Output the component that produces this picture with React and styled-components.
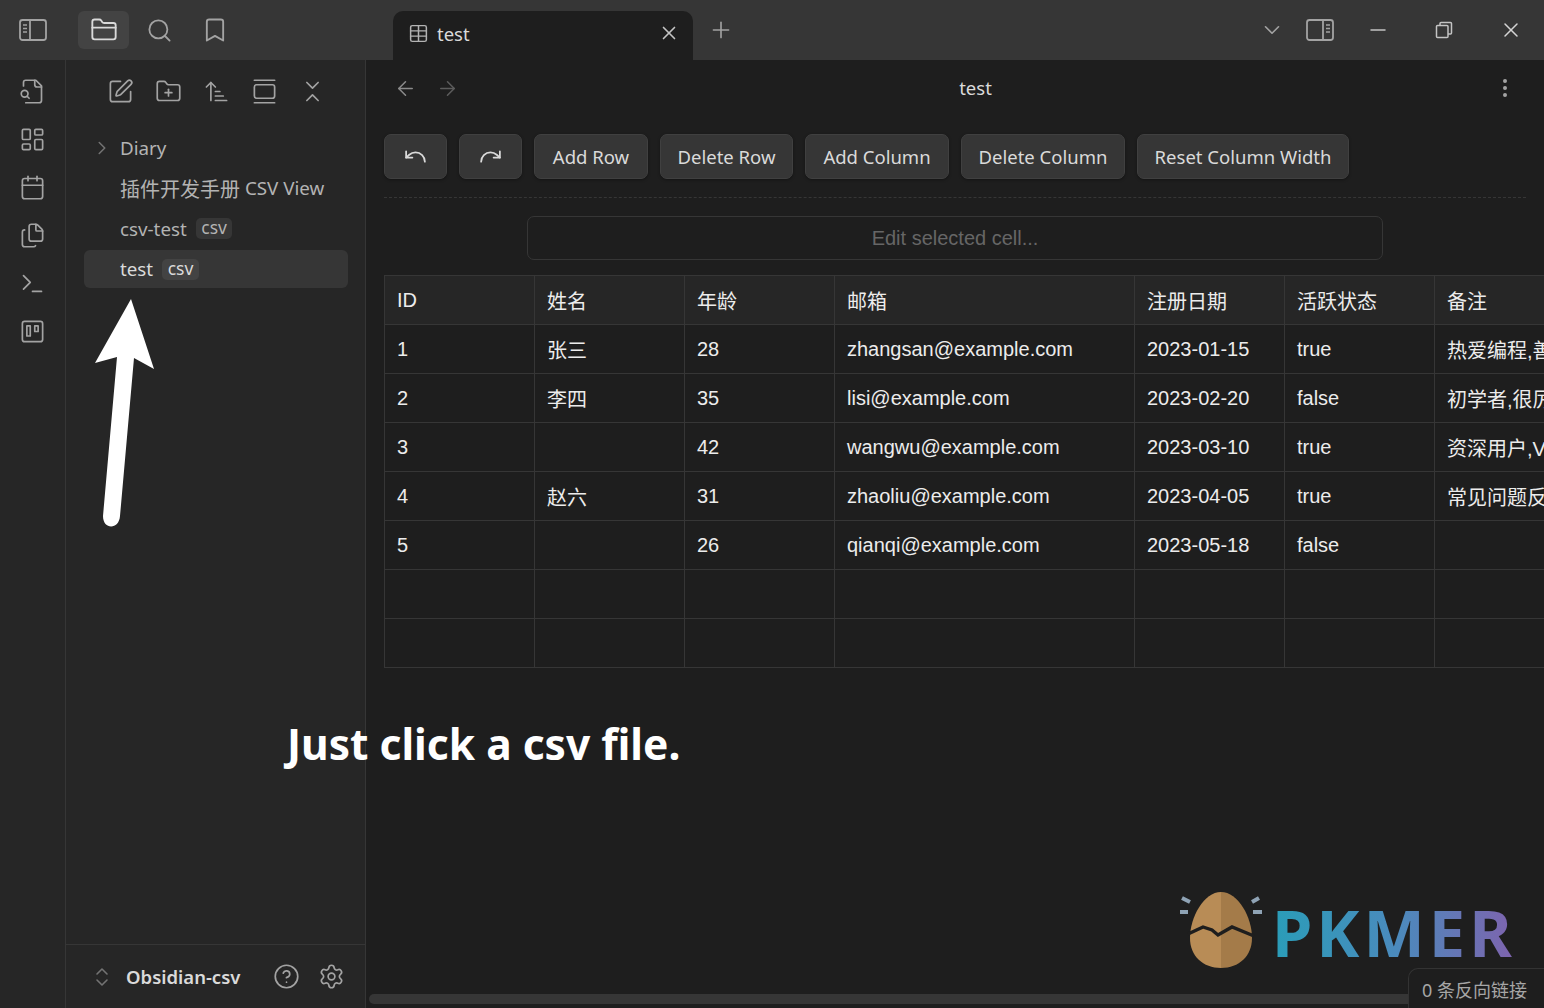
import React from 'react';
import styled, { createGlobalStyle } from 'styled-components';
import {
  ArrowLeft, ArrowRight, ArrowUpNarrowWide, Bookmark, Calendar, ChevronDown, ChevronRight,
  ChevronsDownUp, ChevronsUpDown, CircleHelp, EllipsisVertical, Files, FolderClosed,
  FolderPlus, GalleryVertical, LayoutDashboard, Minus, Plus, Redo, Search, Settings, SquarePen,
  Table, Terminal, Trello, Undo, X,
} from 'lucide-react';

const UI_FONT = `"Noto Sans", "Noto Sans CJK SC", sans-serif`;
const TABLE_FONT = `"Liberation Sans", "Noto Sans CJK SC", sans-serif`;

const GlobalStyle = createGlobalStyle`
  html, body, #root {
    margin: 0;
    padding: 0;
    height: 100%;
    background: #1e1e1e;
    overflow: hidden;
  }
  * {
    box-sizing: border-box;
  }
`;

const Page = styled.div`
  position: relative;
  width: 1544px;
  height: 1008px;
  display: flex;
  flex-direction: column;
  overflow: hidden;
  font-family: ${UI_FONT};
  color: #dadada;
`;

const TitleBar = styled.header`
  flex: 0 0 60px;
  display: flex;
  background: #363636;
`;

const TitleLeft = styled.div`
  flex: 0 0 393px;
  display: flex;
  align-items: flex-start;
  padding: 11px 0 0 8px;
`;

const IconSlot = styled.span`
  flex: 0 0 auto;
  display: flex;
  align-items: center;
  justify-content: center;
  width: ${p => p.$w || 48}px;
  height: ${p => p.$h || 38}px;
  color: ${p => p.$color || '#a3a3a3'};
  border-radius: 6px;
  background: ${p => p.$active ? '#434343' : 'transparent'};
  margin-left: ${p => p.$ml || 0}px;
`;

const Tab = styled.div`
  flex: 0 0 300px;
  align-self: flex-end;
  height: 49px;
  display: flex;
  align-items: center;
  padding: 0 12px 5px 14px;
  background: #1e1e1e;
  border-radius: 10px 10px 0 0;
`;

const TabTitle = styled.span`
  flex: 1;
  margin-left: 8px;
  font-size: 18.5px;
  color: #dadada;
`;

const TitleRight = styled.div`
  flex: 1;
  display: flex;
  align-items: flex-start;
  padding-top: 11px;
`;

const Spacer = styled.div`
  flex: ${p => p.$w ? `0 0 ${p.$w}px` : 1};
`;

const Body = styled.div`
  flex: 1;
  display: flex;
  min-height: 0;
`;

const Ribbon = styled.nav`
  flex: 0 0 66px;
  display: flex;
  flex-direction: column;
  align-items: center;
  padding-top: 7px;
  background: #262626;
  border-right: 1px solid #363636;
`;

const Sidebar = styled.aside`
  flex: 0 0 300px;
  display: flex;
  flex-direction: column;
  background: #262626;
  border-right: 1px solid #363636;
`;

const SideTools = styled.div`
  display: flex;
  justify-content: center;
  padding: 12px 0 0 2px;
`;

const Tree = styled.div`
  flex: 1;
  display: flex;
  flex-direction: column;
  padding: 19px 17px 0 18px;
`;

const TreeRow = styled.div`
  height: 38px;
  margin-bottom: 2.4px;
  display: flex;
  align-items: center;
  gap: ${p => p.$chevron ? 6 : 0}px;
  padding-left: ${p => p.$chevron ? 6 : 36}px;
  font-size: 18.8px;
  border-radius: 6px;
  color: ${p => p.$active ? '#dadada' : '#b3b3b3'};
  background: ${p => p.$active ? '#363636' : 'transparent'};
  white-space: pre;
`;

const CjkText = styled.span`
  font-size: 20px;
`;

const FileTag = styled.span`
  margin-left: 9px;
  padding: 0 5.5px;
  height: 21px;
  line-height: 18px;
  font-size: 17.5px;
  border-radius: 5px;
  color: ${p => p.$active ? '#dadada' : '#b3b3b3'};
  background: ${p => p.$active ? '#434343' : '#363636'};
`;

const SideFooter = styled.div`
  flex: 0 0 64px;
  display: flex;
  align-items: center;
  padding-left: 18px;
  border-top: 1px solid #363636;
`;

const VaultName = styled.span`
  flex: 1;
  margin-left: 6px;
  font-size: 18.5px;
  font-weight: 600;
  color: #dadada;
`;

const Main = styled.main`
  flex: 1;
  min-width: 0;
  display: flex;
  flex-direction: column;
  background: #1e1e1e;
`;

const ViewHeader = styled.div`
  flex: 0 0 56px;
  display: flex;
  align-items: center;
  padding: 0 17px 0 18px;
`;

const ViewTitle = styled.div`
  flex: 1;
  margin-top: -2px;
  text-align: center;
  font-size: 18.5px;
  color: #dadada;
`;

const Content = styled.div`
  padding: 18px 18px 0;
`;

const Toolbar = styled.div`
  display: flex;
  gap: 12px;
  padding-bottom: 18px;
  border-bottom: 1px dashed #363636;
`;

const ToolButton = styled.button`
  width: ${p => p.$w}px;
  height: 45px;
  padding: 0;
  display: flex;
  align-items: center;
  justify-content: center;
  font-family: ${UI_FONT};
  font-size: 18.5px;
  color: #dadada;
  background: #363636;
  border: 1px solid #404040;
  border-radius: 7px;
  box-shadow: 0 1px 3px rgba(0, 0, 0, 0.35);
`;

const CellEditor = styled.div`
  width: 856px;
  height: 44px;
  margin: 18px auto 15px;
  display: flex;
  align-items: center;
  justify-content: center;
  font-family: ${TABLE_FONT};
  font-size: 20px;
  color: #666;
  background: #1e1e1e;
  border: 1px solid #363636;
  border-radius: 7px;
`;

const TableClip = styled.div`
  margin-right: -18px;
  overflow: hidden;
`;

const Grid = styled.table`
  width: 1200px;
  table-layout: fixed;
  border-collapse: collapse;
  font-family: ${TABLE_FONT};
  font-size: 20px;
  color: #ececec;
`;

const GridCol = styled.col`
  width: ${p => p.$w}px;
`;

const Cell = styled.td`
  height: 49px;
  padding: 0 12px;
  white-space: nowrap;
  overflow: hidden;
  font-weight: 400;
  text-align: left;
  border: 1px solid #363636;
  background: ${p => p.$head ? '#262626' : 'transparent'};
`;

const Caption = styled.div`
  position: absolute;
  left: 287px;
  top: 712px;
  font-size: 42.5px;
  font-weight: 700;
  line-height: 64px;
  color: #fff;
  white-space: nowrap;
`;

const ArrowOverlay = styled.svg`
  position: absolute;
  left: 80px;
  top: 280px;
`;

const LogoMark = styled.div`
  position: absolute;
  left: 1178px;
  top: 890px;
  display: flex;
  align-items: flex-start;
  gap: 10px;
`;

const EggSvg = styled.svg`
  filter: blur(0.4px);
`;

const LogoText = styled.span`
  font-size: 65px;
  line-height: 84px;
  font-weight: 700;
  letter-spacing: 4px;
  color: transparent;
  background: linear-gradient(90deg, #2a9db8, #4a8bbd 50%, #7f63ae);
  -webkit-background-clip: text;
  background-clip: text;
  filter: blur(0.5px);
`;

const ScrollThumb = styled.div`
  position: absolute;
  left: 369px;
  right: 130px;
  bottom: 4px;
  height: 10px;
  background: #363636;
  border-radius: 5px;
`;

const StatusBar = styled.div`
  position: absolute;
  right: 0;
  bottom: 0;
  width: 136px;
  height: 40px;
  padding-left: 13px;
  display: flex;
  align-items: center;
  font-size: 18px;
  color: #a6a6a6;
  white-space: nowrap;
  background: #1e1e1e;
  border: 1px solid #333;
  border-width: 1px 0 0 1px;
  border-radius: 10px 0 0 0;
`;

const PanelIcon = ({ right }) => (
  <svg width="28" height="24" viewBox="0 0 28 24" fill="none" stroke="currentColor" strokeWidth="1.8">
    <rect x="1" y="2" width="26" height="20" rx="2.5" />
    <path d={right ? 'M17 2v20' : 'M11 2v20'} />
    <path d={right ? 'M20 7h4M20 10.5h4M20 14h4' : 'M4 7h4M4 10.5h4M4 14h4'} strokeWidth="1.5" />
  </svg>
);

const RestoreIcon = () => (
  <svg width="18" height="18" viewBox="0 0 18 18" fill="none" stroke="currentColor" strokeWidth="1.5">
    <rect x="1.5" y="4.5" width="11.5" height="12" rx="1" />
    <path d="M5 4.5V2.5a1 1 0 0 1 1-1h9.5a1 1 0 0 1 1 1V12a1 1 0 0 1-1 1H13" />
  </svg>
);

const FileSearchIcon = ({ size, strokeWidth }) => (
  <svg width={size} height={size} viewBox="0 0 24 24" fill="none" stroke="currentColor" strokeWidth={strokeWidth} strokeLinecap="round" strokeLinejoin="round">
    <path d="M14 2v4a2 2 0 0 0 2 2h4" />
    <path d="M4 7V4a2 2 0 0 1 2-2h9l5 5v13a2 2 0 0 1-2 2H6" />
    <circle cx="5" cy="14" r="3" />
    <path d="m9 18-1.8-1.8" />
  </svg>
);

const EggLogo = () => (
  <EggSvg width="84" height="80" viewBox="0 0 84 80">
    <path d="M43 2C26 2 12 27 12 48c0 18 13 30 31 30z" fill="#b88c56" />
    <path d="M43 2c17 0 31 25 31 46 0 18-13 30-31 30z" fill="#a47b49" />
    <path d="M10 44l15-7 9 3 6 5 14-8 22 9" fill="none" stroke="#1e1e1e" strokeWidth="3.4" />
    <path d="M4 8l8 4M2 22h8M74 12l7-4M75 22h9" stroke="#8fa3b5" strokeWidth="4" fill="none" />
  </EggSvg>
);

const columns = ['ID', '姓名', '年龄', '邮箱', '注册日期', '活跃状态', '备注'];
const widths = [150, 150, 150, 300, 150, 150, 150];
const rows = [
  ['1', '张三', '28', 'zhangsan@example.com', '2023-01-15', 'true', '热爱编程,善于分享'],
  ['2', '李四', '35', 'lisi@example.com', '2023-02-20', 'false', '初学者,很厉害'],
  ['3', '', '42', 'wangwu@example.com', '2023-03-10', 'true', '资深用户,VIP'],
  ['4', '赵六', '31', 'zhaoliu@example.com', '2023-04-05', 'true', '常见问题反馈'],
  ['5', '', '26', 'qianqi@example.com', '2023-05-18', 'false', ''],
  ['', '', '', '', '', '', ''],
  ['', '', '', '', '', '', ''],
];

const ribbonIcons = [FileSearchIcon, LayoutDashboard, Calendar, Files, Terminal, Trello];
const sideIcons = [SquarePen, FolderPlus, ArrowUpNarrowWide, GalleryVertical, ChevronsDownUp];
const actions = [
  { label: 'Add Row', w: 114 },
  { label: 'Delete Row', w: 133 },
  { label: 'Add Column', w: 144 },
  { label: 'Delete Column', w: 164 },
  { label: 'Reset Column Width', w: 212 },
];

const App = () => (
  <Page>
    <GlobalStyle />
    <TitleBar>
      <TitleLeft>
        <IconSlot $w={50}><PanelIcon /></IconSlot>
        <IconSlot $w={51} $ml={20} $active $color="#dadada"><FolderClosed size={28} strokeWidth={1.6} /></IconSlot>
        <IconSlot $w={55} $ml={3}><Search size={27} strokeWidth={1.6} /></IconSlot>
        <IconSlot $w={55}><Bookmark size={28} strokeWidth={1.6} /></IconSlot>
      </TitleLeft>
      <Tab>
        <IconSlot $w={22} $color="#b3b3b3"><Table size={21} strokeWidth={1.7} /></IconSlot>
        <TabTitle>test</TabTitle>
        <IconSlot $w={24} $color="#c4c4c4"><X size={22} strokeWidth={1.8} /></IconSlot>
      </Tab>
      <TitleRight>
        <IconSlot $w={56}><Plus size={26} strokeWidth={1.5} /></IconSlot>
        <Spacer />
        <IconSlot $w={48}><ChevronDown size={26} strokeWidth={1.5} /></IconSlot>
        <IconSlot $w={48}><PanelIcon right /></IconSlot>
        <IconSlot $w={66} $ml={1} $color="#c4c4c4"><Minus size={24} strokeWidth={1.5} /></IconSlot>
        <IconSlot $w={66} $color="#c4c4c4"><RestoreIcon /></IconSlot>
        <IconSlot $w={67} $color="#d4d4d4"><X size={24} strokeWidth={1.5} /></IconSlot>
      </TitleRight>
    </TitleBar>
    <Body>
      <Ribbon>
        {ribbonIcons.map((Icon, i) => (
          <IconSlot key={i} $w={48} $h={48}><Icon size={27} strokeWidth={1.5} /></IconSlot>
        ))}
      </Ribbon>
      <Sidebar>
        <SideTools>
          {sideIcons.map((Icon, i) => (
            <IconSlot key={i}><Icon size={27} strokeWidth={1.5} /></IconSlot>
          ))}
        </SideTools>
        <Tree>
          <TreeRow $chevron>
            <IconSlot $w={24} $h={24} $color="#737373"><ChevronRight size={22} strokeWidth={1.7} /></IconSlot>
            <span>Diary</span>
          </TreeRow>
          <TreeRow><CjkText>插件开发手册</CjkText> CSV View</TreeRow>
          <TreeRow>csv-test<FileTag>csv</FileTag></TreeRow>
          <TreeRow $active>test<FileTag $active>csv</FileTag></TreeRow>
        </Tree>
        <SideFooter>
          <IconSlot $w={36} $h={30} $color="#737373"><ChevronsUpDown size={24} strokeWidth={1.6} /></IconSlot>
          <VaultName>Obsidian-csv</VaultName>
          <IconSlot $w={45}><CircleHelp size={27} strokeWidth={1.5} /></IconSlot>
          <IconSlot $w={45}><Settings size={27} strokeWidth={1.5} /></IconSlot>
          <Spacer $w={11} />
        </SideFooter>
      </Sidebar>
      <Main>
        <ViewHeader>
          <IconSlot $w={42} $h={30} $color="#8a8a8a"><ArrowLeft size={23} strokeWidth={1.6} /></IconSlot>
          <IconSlot $w={42} $h={30} $color="#5c5c5c"><ArrowRight size={23} strokeWidth={1.6} /></IconSlot>
          <ViewTitle>test</ViewTitle>
          <IconSlot $w={44} $h={30}><EllipsisVertical size={24} strokeWidth={2} /></IconSlot>
        </ViewHeader>
        <Content>
          <Toolbar>
            <ToolButton $w={63}><Undo size={25} strokeWidth={1.7} color="#dadada" /></ToolButton>
            <ToolButton $w={63}><Redo size={25} strokeWidth={1.7} color="#dadada" /></ToolButton>
            {actions.map(a => <ToolButton key={a.label} $w={a.w}>{a.label}</ToolButton>)}
          </Toolbar>
          <CellEditor>Edit selected cell...</CellEditor>
          <TableClip>
            <Grid>
              <colgroup>
                {widths.map((w, i) => <GridCol key={i} $w={w} />)}
              </colgroup>
              <thead>
                <tr>{columns.map(c => <Cell as="th" key={c} $head>{c}</Cell>)}</tr>
              </thead>
              <tbody>
                {rows.map((row, r) => (
                  <tr key={r}>{row.map((v, c) => <Cell key={c}>{v}</Cell>)}</tr>
                ))}
              </tbody>
            </Grid>
          </TableClip>
        </Content>
      </Main>
    </Body>

    <ArrowOverlay width="100" height="260" viewBox="0 0 100 260">
      <path
        d="M51 19L15 83L37 77L23 236C23 250 39 250 40 236L54 78L74 89Z"
        fill="#fff"
      />
    </ArrowOverlay>
    <Caption>Just click a csv file.</Caption>
    <LogoMark>
      <EggLogo />
      <LogoText>PKMER</LogoText>
    </LogoMark>
    <ScrollThumb />
    <StatusBar>0 条反向链接</StatusBar>
  </Page>
);

export default App;
